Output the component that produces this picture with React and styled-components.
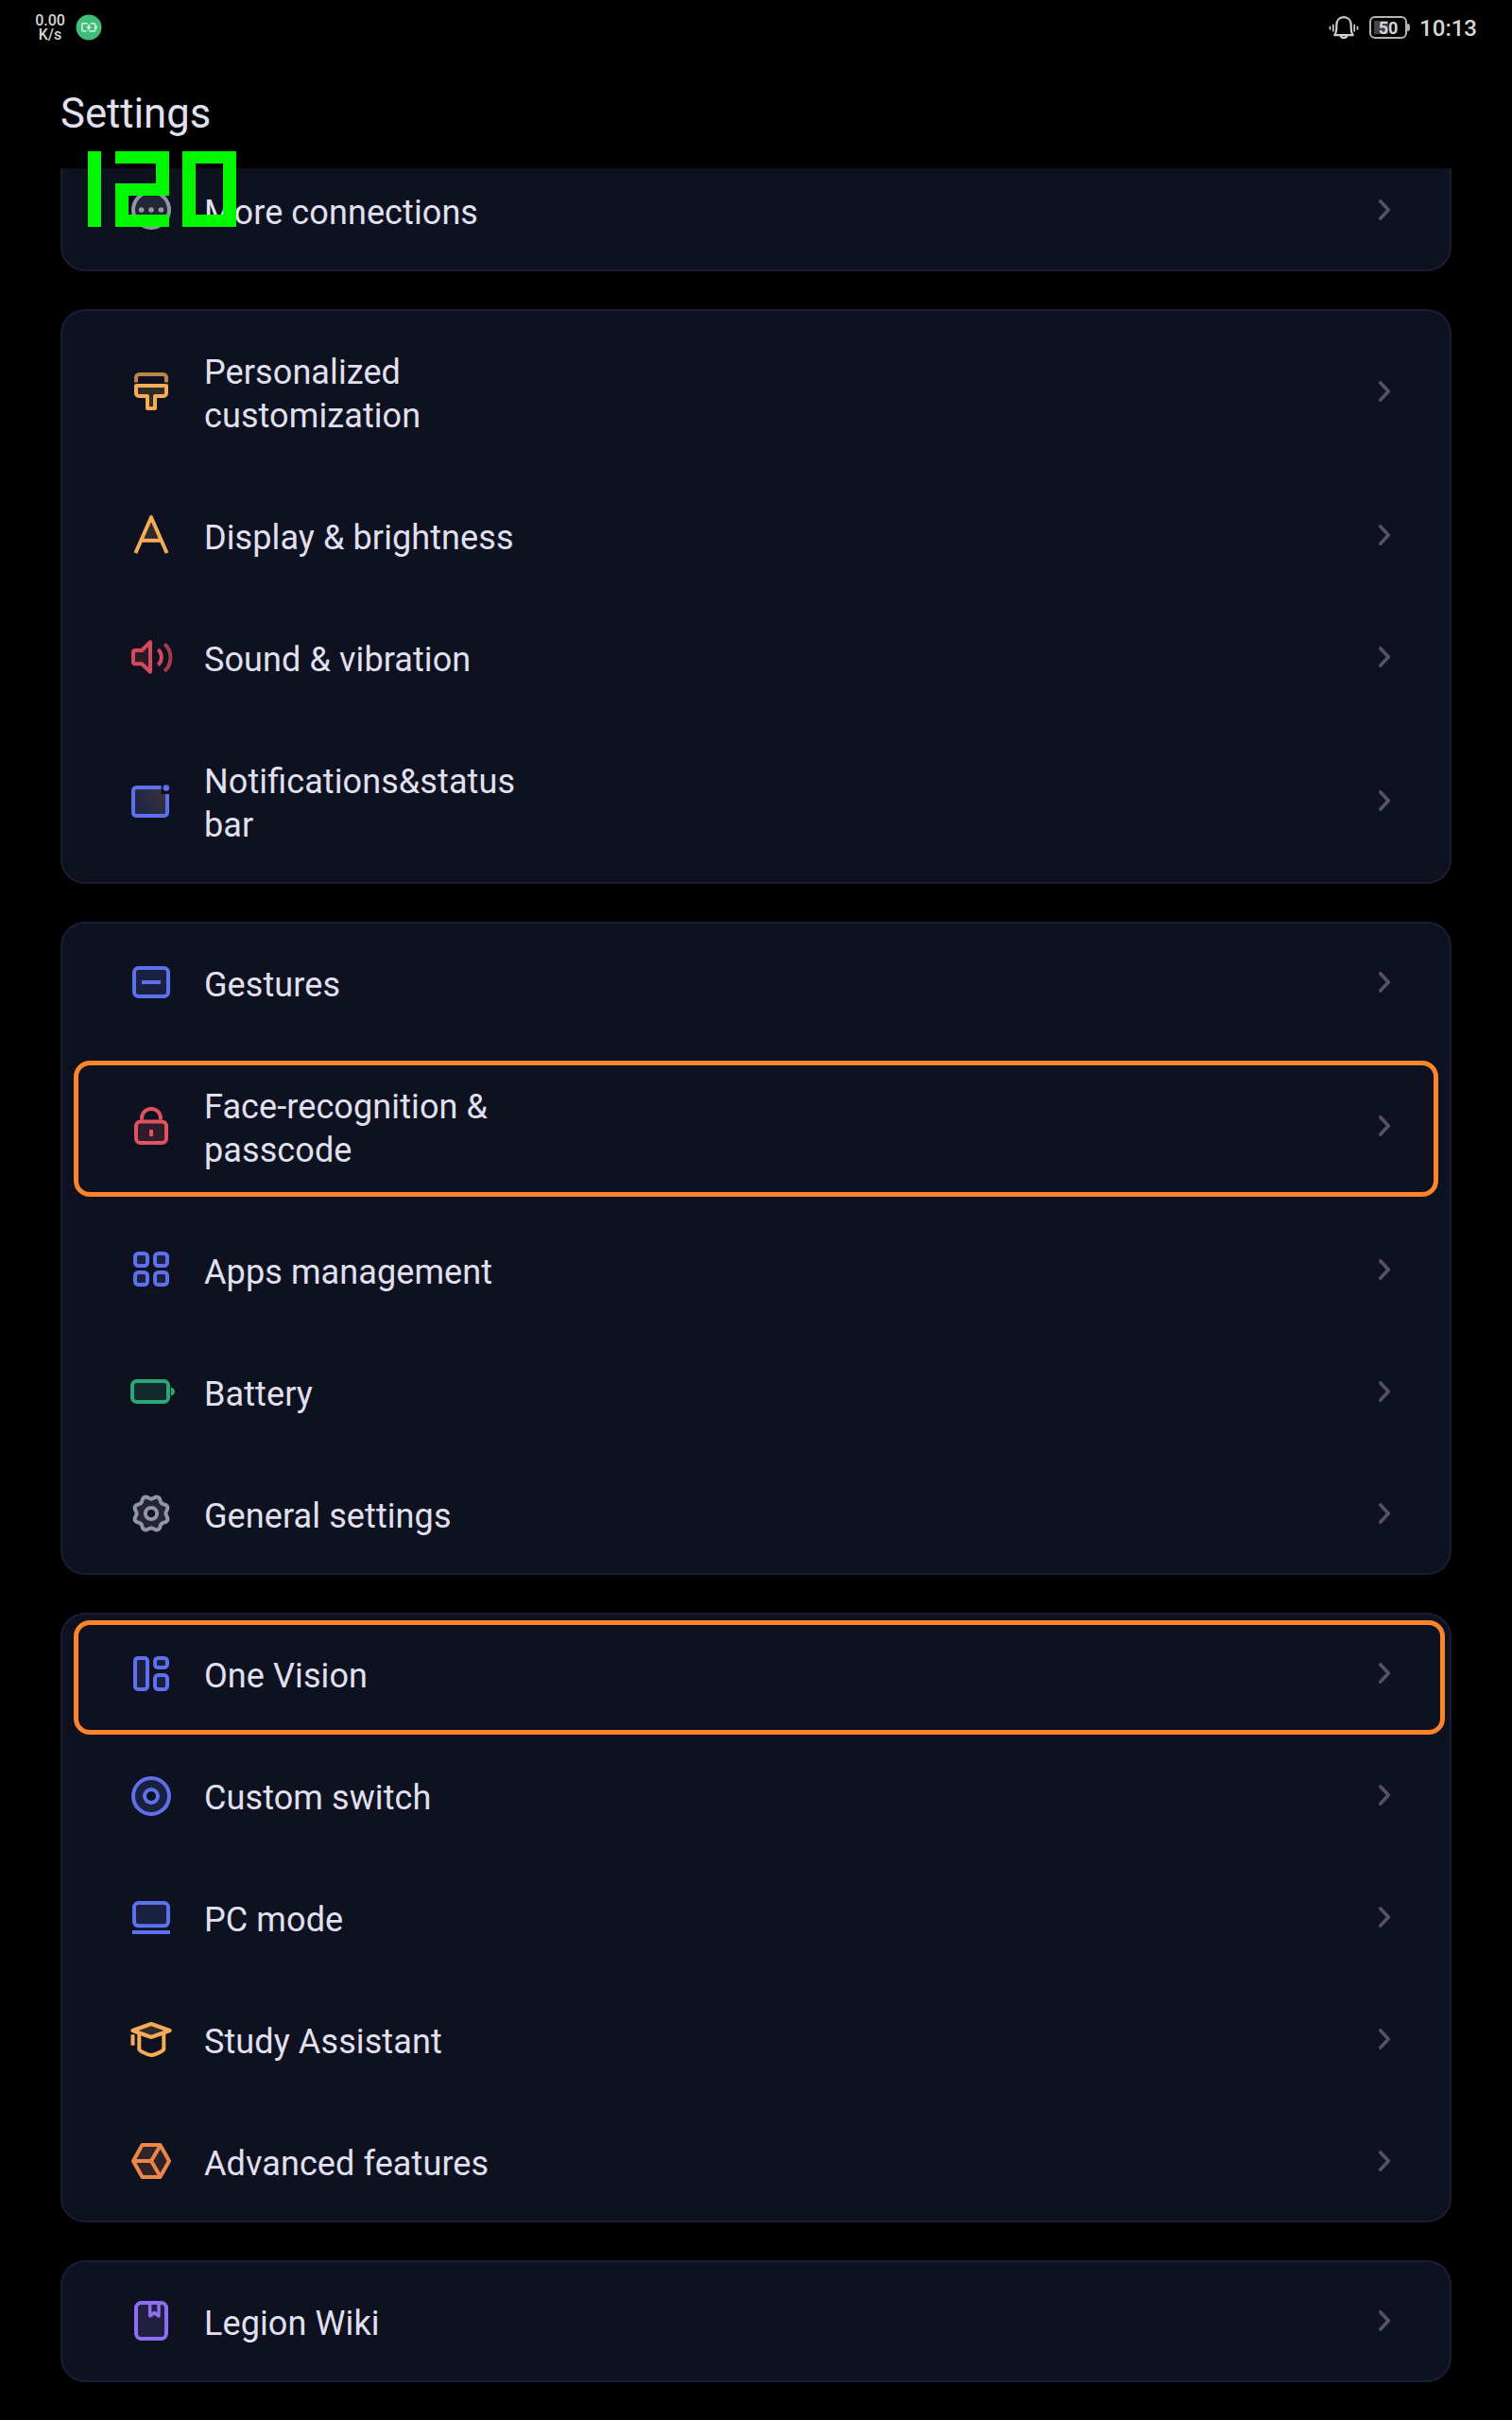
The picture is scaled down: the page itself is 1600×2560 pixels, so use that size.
import React from "react";
import styled, { createGlobalStyle } from "styled-components";

const GlobalStyle = createGlobalStyle`
  *, *::before, *::after { box-sizing: border-box; }
  body {
    margin: 0;
    background: #000;
    font-family: Roboto, "Noto Sans", sans-serif;
    color: #e0e0f0;
  }
`;

const Screen = styled.div`
  display: flex;
  flex-direction: column;
  width: 1600px;
  height: 2560px;
  overflow: hidden;
  background: #000;
`;

const StatusBar = styled.header`
  display: flex;
  align-items: center;
  justify-content: space-between;
  height: 58px;
  padding: 0 37px;
  color: #d6d6d6;
`;

const StatusSide = styled.div`
  display: flex;
  align-items: center;
  gap: ${({ $gap }) => $gap}px;
`;

const NetSpeed = styled.div`
  width: 32px;
  font-size: 16px;
  line-height: 15px;
  font-weight: 500;
  text-align: center;
`;

const BatteryLevel = styled.div`
  position: relative;
  display: flex;
  align-items: center;
  justify-content: center;
  width: 40px;
  height: 24px;
  margin-right: 2px;
  padding-top: 2px;
  border: 2px solid #b4b4b4;
  border-radius: 6px;
  font-size: 18px;
  line-height: 20px;
  font-weight: 700;
  background: linear-gradient(#444, #444) 3px 3px / 15px 14px no-repeat;

  &::after {
    content: "";
    position: absolute;
    right: -5px;
    top: 6px;
    width: 3px;
    height: 8px;
    border-radius: 0 4px 4px 0;
    background: #b4b4b4;
  }
`;

const Clock = styled.time`
  font-size: 24px;
  line-height: 28px;
  font-weight: 500;
  padding-top: 1px;
`;

const TitleBar = styled.div`
  position: relative;
  height: 120px;
  padding: 37px 64px 0;
`;

const Title = styled.h1`
  margin: 0;
  font-size: 43.6px;
  line-height: 52px;
  font-weight: 400;
`;

const FrameRate = styled.div`
  position: absolute;
  z-index: 2;
  left: 93px;
  top: 102px;
  display: flex;
  gap: 14.5px;
  opacity: 0.97;
`;

const Digit = styled.span`
  display: grid;
  grid-template-columns: ${({ $narrow }) => ($narrow ? "14px" : "14px 29px 14px")};
  grid-template-rows: 13px 20.5px 13px 20.5px 13px;
`;

const Segment = styled.i`
  grid-area: ${({ $area }) => $area};
  background: #00ff00;
`;

const List = styled.main`
  display: flex;
  flex: 1;
  flex-direction: column;
  gap: 40px;
  padding: 0 64px;
  overflow: hidden;
`;

const Card = styled.section`
  display: flex;
  flex: none;
  flex-direction: column;
  margin-top: ${({ $scrolled }) => ($scrolled ? "-20px" : "0")};
  border-radius: 26px;
  background: #0e111f;
  box-shadow: inset 0 0 0 2px #1a1c35;
`;

const Row = styled.div`
  position: relative;
  display: flex;
  align-items: center;
  gap: 32px;
  height: ${({ $tall }) => ($tall ? 175 : 129)}px;
  padding: 0 64px 0 72px;
`;

const Highlight = styled.span`
  position: absolute;
  inset: ${({ $inset }) => $inset};
  border: 5px solid #ff832b;
  border-radius: 17px;
`;

const Glyph = styled.svg`
  flex: none;
  width: 48px;
  height: 48px;
  margin-top: -1px;
  overflow: visible;
  color: ${({ $color }) => $color};
  stroke: currentColor;
  stroke-width: 4;
  fill: none;

  .tint { fill: currentColor; fill-opacity: 0.16; }
  .solid { fill: currentColor; stroke: none; }
  .soft { opacity: 0.75; }
`;

const Label = styled.span`
  width: 350px;
  padding-top: 4px;
  font-size: 36px;
  line-height: 46px;
  letter-spacing: 0.1px;
  font-feature-settings: "liga" 1;
`;

const ChevronIcon = styled.svg`
  flex: none;
  width: 14px;
  height: 24px;
  margin: -1px 0 0 auto;
  fill: none;
  stroke: #53545f;
  stroke-width: 3.6;
  stroke-linecap: round;
  stroke-linejoin: round;
`;

const GEAR = Array.from({ length: 96 }, (_, i) => {
  const a = (i / 96) * Math.PI * 2;
  const r = 17 - 1.6 * Math.cos(8 * a);
  return `${(24 + r * Math.cos(a)).toFixed(2)},${(24 + r * Math.sin(a)).toFixed(2)}`;
}).join(" ");

const ICONS = {
  more: (
    <>
      <circle className="tint" cx="24" cy="24" r="19" />
      <circle className="solid" cx="13.6" cy="24" r="2.8" />
      <circle className="solid" cx="24" cy="24" r="2.8" />
      <circle className="solid" cx="34.4" cy="24" r="2.8" />
    </>
  ),
  brush: (
    <>
      <path className="soft" d="M8 14.5V9.5A3.5 3.5 0 0 1 11.5 6h25A3.5 3.5 0 0 1 40 9.5v5" />
      <path className="tint" strokeLinejoin="round" d="M8 18H40V26a3 3 0 0 1-3 3H28V42H20V29H11a3 3 0 0 1-3-3Z" />
    </>
  ),
  display: (
    <>
      <path className="tint" stroke="none" d="M24 6 34.5 29.7H13.5Z" />
      <path strokeLinejoin="round" d="M7.4 43 24 5.2 40.6 43M13.5 29.7H34.5" />
    </>
  ),
  sound: (
    <>
      <path className="tint" strokeLinejoin="round" d="M7 17H14L23 8.2V39.8L14 31.3H7a2 2 0 0 1-2-2V19a2 2 0 0 1 2-2Z" />
      <path d="M31.2 16C36 20 36 28.6 31.2 32.4" />
      <path className="soft" d="M38 10.2C46.5 17 46.5 32 38 39" />
    </>
  ),
  notification: (
    <>
      <defs>
        <linearGradient id="panel" x1="0" y1="1" x2="1" y2="0.4">
          <stop offset="0" stopColor="#1b2046" />
          <stop offset="1" stopColor="#35333f" />
        </linearGradient>
      </defs>
      <path stroke="none" fill="url(#panel)" d="M5 10H34.5V17H41V40H5Z" />
      <path d="M34.6 10H8.5A3.5 3.5 0 0 0 5 13.5V36.5A3.5 3.5 0 0 0 8.5 40H37.5A3.5 3.5 0 0 0 41 36.5V17" />
      <circle className="solid" cx="39.8" cy="10.5" r="3.3" />
    </>
  ),
  gestures: (
    <>
      <rect className="tint" x="6" y="9" width="36" height="30" rx="4.5" />
      <path d="M14 24H34" />
    </>
  ),
  lock: (
    <>
      <rect className="tint" x="8" y="19.5" width="32" height="22.5" rx="4.5" />
      <path d="M14 17.5V16a10 10 0 0 1 20 0V17.5M24 28v7" />
    </>
  ),
  apps: (
    <>
      <rect className="tint" x="7" y="7" width="13" height="13" rx="3.5" />
      <rect className="tint" x="28" y="7" width="13" height="13" rx="3.5" />
      <rect className="tint" x="7" y="27" width="13" height="13" rx="3.5" />
      <rect className="tint" x="28" y="27" width="13" height="13" rx="3.5" />
    </>
  ),
  battery: (
    <>
      <rect className="tint" x="4" y="13" width="38" height="22" rx="4.5" />
      <path className="solid" d="M45 19.2Q49 21 49 24T45 28.8Z" />
    </>
  ),
  gear: (
    <>
      <path className="tint" stroke="none" fillRule="evenodd" d="M24 7a17 17 0 1 0 0 34 17 17 0 1 0 0-34ZM24 18a6 6 0 1 0 0 12 6 6 0 1 0 0-12Z" />
      <polygon points={GEAR} />
      <circle cx="24" cy="24" r="6.1" />
    </>
  ),
  vision: (
    <>
      <rect className="tint" x="7" y="8" width="13" height="33" rx="3" />
      <rect className="tint" x="28" y="8" width="13" height="10" rx="3.5" />
      <rect className="tint" x="28" y="26" width="13" height="15" rx="3.5" />
    </>
  ),
  ring: (
    <>
      <circle className="tint" cx="24" cy="25" r="19" />
      <circle fill="#0e111f" cx="24" cy="25" r="7" />
    </>
  ),
  pc: (
    <>
      <rect className="tint" x="6" y="9" width="36" height="24.3" rx="4.5" />
      <path d="M4 40H44" />
    </>
  ),
  study: (
    <>
      <path className="tint" strokeLinejoin="round" d="M4.3 15 24 8 43.7 15 24 22Z" />
      <path strokeLinejoin="round" d="M11.3 18V35C11.3 36.5 21 41 24 41S37.3 36.5 37.3 35V18" />
      <path d="M4.5 19.3V30.7" />
    </>
  ),
  hexagon: (
    <>
      <path className="tint" strokeLinejoin="round" d="M14.5 7H33.5L43 24 33.5 41H14.5L5 24Z" />
      <path d="M5 24H24L34 7M24 24 34 41" />
    </>
  ),
  wiki: (
    <>
      <rect className="tint" x="8" y="5" width="32" height="38" rx="5.5" />
      <path strokeWidth="3.5" strokeLinejoin="round" strokeLinecap="round" d="M22.7 5V19L27.3 15.5 32 19V5" />
    </>
  ),
};

const ORANGE = "#f5ac57";
const BLUE = "#5e70ee";
const RED = "#d4495d";
const GRAY = "#9394a4";

const GROUPS = [
  [{ label: "More connections", icon: "more", color: GRAY }],
  [
    { label: "Personalized customization", icon: "brush", color: ORANGE, tall: true },
    { label: "Display & brightness", icon: "display", color: ORANGE },
    { label: "Sound & vibration", icon: "sound", color: RED },
    { label: "Notifications&status bar", icon: "notification", color: BLUE, tall: true },
  ],
  [
    { label: "Gestures", icon: "gestures", color: BLUE },
    { label: "Face-recognition & passcode", icon: "lock", color: "#de535f", tall: true, mark: "18px 14px 13px 14px" },
    { label: "Apps management", icon: "apps", color: BLUE },
    { label: "Battery", icon: "battery", color: "#2ba679" },
    { label: "General settings", icon: "gear", color: GRAY },
  ],
  [
    { label: "One Vision", icon: "vision", color: BLUE, mark: "8px 7px 0 14px" },
    { label: "Custom switch", icon: "ring", color: BLUE },
    { label: "PC mode", icon: "pc", color: BLUE },
    { label: "Study Assistant", icon: "study", color: ORANGE },
    { label: "Advanced features", icon: "hexagon", color: "#ec8649" },
  ],
  [{ label: "Legion Wiki", icon: "wiki", color: "#8d6df2" }],
];

const ChargeBadge = () => (
  <svg width="28" height="28" viewBox="0 0 28 28" fill="none">
    <circle cx="14" cy="14" r="13.5" fill="#40bd78" />
    <g stroke="#d9f5e4" strokeWidth="1.5">
      <path d="M12.5 9.8H8.2A1.4 1.4 0 0 0 6.8 11.2V16.6A1.4 1.4 0 0 0 8.2 18H11M16 9.8H19.3A1.4 1.4 0 0 1 20.7 11.2V16.6A1.4 1.4 0 0 1 19.3 18H14.5" />
      <path d="M22 12.3V15.5" />
    </g>
    <path fill="#d9f5e4" d="M15.5 9.5 10.8 14.6H13.2L12.2 18.3 17 13.2H14.6Z" />
  </svg>
);

const VibrateBell = () => (
  <svg width="32" height="28" viewBox="0 0 32 28" fill="none" stroke="#d0d0d0" strokeWidth="2.2">
    <path strokeLinejoin="round" d="M6.3 22.2C8 20 8.3 18.5 8.3 15V11.5C8.3 6.5 11.5 3.2 16 3.2S23.7 6.5 23.7 11.5V15C23.7 18.5 24 20 25.7 22.2Z" />
    <path d="M12.8 22.5C13.2 25.8 18.8 25.8 19.2 22.5" />
    <path strokeWidth="1.7" d="M4.8 10.8V18.4M1.5 12.8V16.4M27.2 10.8V18.4M30.5 12.8V16.4" />
  </svg>
);

const Chevron = () => (
  <ChevronIcon viewBox="0 0 14 24">
    <path d="M2.8 2.9 11.3 12 2.8 21.1" />
  </ChevronIcon>
);

const DIGITS = [
  { narrow: true, segments: ["1 / 1 / 6 / 2"] },
  {
    segments: ["1 / 1 / 2 / 4", "1 / 3 / 4 / 4", "3 / 1 / 4 / 4", "3 / 1 / 6 / 2", "5 / 1 / 6 / 4"],
  },
  { segments: ["1 / 1 / 2 / 4", "1 / 1 / 6 / 2", "1 / 3 / 6 / 4", "5 / 1 / 6 / 4"] },
];

export default function App() {
  return (
    <Screen>
      <GlobalStyle />
      <StatusBar>
        <StatusSide $gap={11}>
          <NetSpeed>
            0.00
            <br />
            K/s
          </NetSpeed>
          <ChargeBadge />
        </StatusSide>
        <StatusSide $gap={11}>
          <VibrateBell />
          <BatteryLevel>50</BatteryLevel>
          <Clock>10:13</Clock>
        </StatusSide>
      </StatusBar>
      <TitleBar>
        <Title>Settings</Title>
        <FrameRate role="img" aria-label="120">
          {DIGITS.map((digit, i) => (
            <Digit key={i} $narrow={digit.narrow}>
              {digit.segments.map((area) => (
                <Segment key={area} $area={area} />
              ))}
            </Digit>
          ))}
        </FrameRate>
      </TitleBar>
      <List>
        {GROUPS.map((rows, i) => (
          <Card key={i} $scrolled={i === 0}>
            {rows.map((row) => (
              <Row key={row.label} $tall={row.tall}>
                <Glyph viewBox="0 0 48 48" $color={row.color}>
                  {ICONS[row.icon]}
                </Glyph>
                <Label>{row.label}</Label>
                <Chevron />
                {row.mark && <Highlight $inset={row.mark} />}
              </Row>
            ))}
          </Card>
        ))}
      </List>
    </Screen>
  );
}
